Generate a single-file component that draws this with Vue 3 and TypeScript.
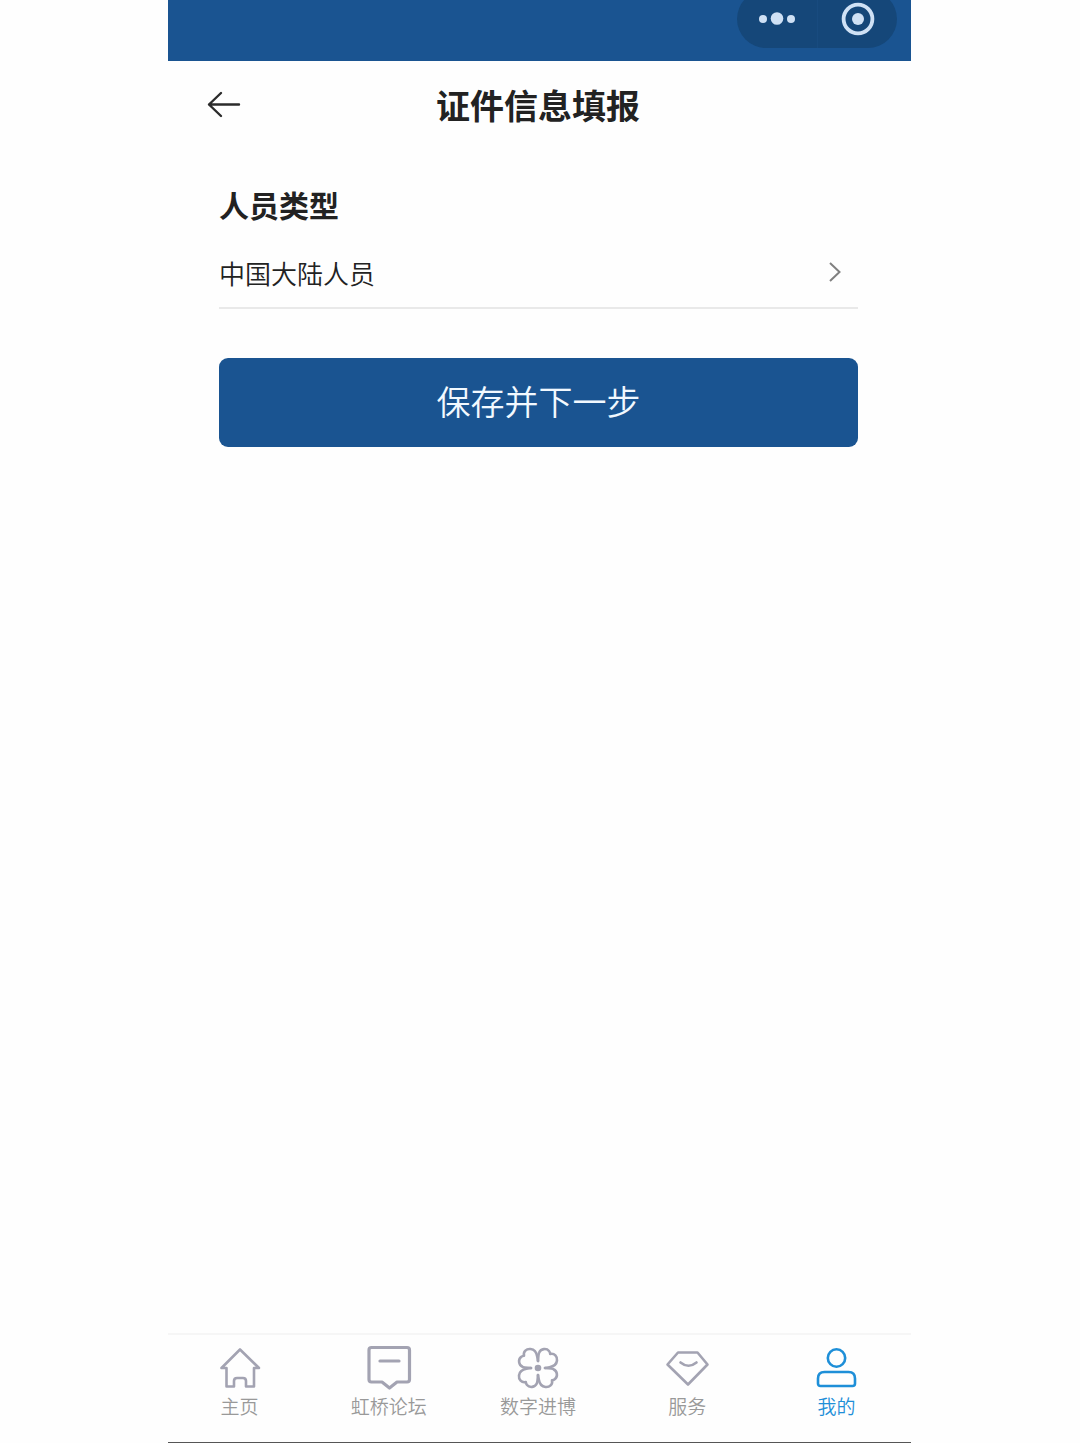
<script setup lang="ts">
import { ref } from 'vue'

interface Tab {
  id: string
  label: string
}

const tabs: Tab[] = [
  { id: 'home', label: '主页' },
  { id: 'forum', label: '虹桥论坛' },
  { id: 'digital', label: '数字进博' },
  { id: 'service', label: '服务' },
  { id: 'mine', label: '我的' },
]

const petalAngles = [0, 90, 180, 270]

const activeTab = ref('mine')
const personType = ref('中国大陆人员')
</script>

<template>
  <div class="page">
    <div class="app">
      <div class="topbar">
        <div class="capsule">
          <button type="button" class="capsule-btn" aria-label="更多">
            <svg width="40" height="34" viewBox="0 0 40 34" fill="#cfe1f5">
              <circle cx="6" cy="17" r="4" />
              <circle cx="20" cy="16.5" r="6.3" />
              <circle cx="34" cy="17" r="4" />
            </svg>
          </button>
          <button type="button" class="capsule-btn" aria-label="关闭">
            <svg width="34" height="34" viewBox="0 0 34 34">
              <circle cx="17" cy="17" r="14.4" fill="none" stroke="#cfe1f5" stroke-width="3.8" />
              <circle cx="17" cy="17" r="6" fill="#cfe1f5" />
            </svg>
          </button>
        </div>
      </div>

      <header class="header">
        <button type="button" class="back" aria-label="返回">
          <svg width="34" height="28" viewBox="0 0 34 28" fill="none" stroke="#2b2b2b" stroke-width="2.4" stroke-linecap="round" stroke-linejoin="round">
            <path d="M14 2 2 13.500l12 11.500M2 13.500h30" />
          </svg>
        </button>
        <h1 class="title">证件信息填报</h1>
      </header>

      <main class="content">
        <form @submit.prevent>
          <label class="label" for="person-type">人员类型</label>
          <div class="field">
            <select id="person-type" v-model="personType" class="select">
              <option>中国大陆人员</option>
            </select>
            <svg class="chevron" width="14" height="22" viewBox="0 0 14 22" fill="none" stroke="#808080" stroke-width="2">
              <path d="M2 2l9.500 9L2 20" />
            </svg>
          </div>
          <button type="submit" class="submit">保存并下一步</button>
        </form>
      </main>

      <nav class="tabbar">
        <ul class="tabs">
          <li v-for="tab in tabs" :key="tab.id" class="tab-item">
            <a href="#" class="tab" :class="{ active: tab.id === activeTab }" @click.prevent="activeTab = tab.id">
              <svg class="icon" viewBox="0 0 46 46" fill="none" stroke="currentColor" stroke-width="2.6" stroke-linecap="round" stroke-linejoin="round">
                <path v-if="tab.id === 'home'" d="M23 4.500 4.500 23H9.500V41.500H17V36Q17 33 20 33H26Q29 33 29 36V41.500H37V23H42Z" />
                <template v-else-if="tab.id === 'forum'">
                  <path stroke-width="3.200" d="M5.500 2.500H41Q43.500 2.500 43.500 5V34.500Q43.500 37 41 37H31L23.500 43 16 37H5.500Q3 37 3 34.500V5Q3 2.500 5.500 2.500Z" />
                  <path stroke-width="3.200" d="M14 16H33" />
                </template>
                <template v-else-if="tab.id === 'digital'">
                  <path
                    v-for="angle in petalAngles"
                    :key="angle"
                    :transform="`rotate(${angle} 23 23)`"
                    d="M16 23C12 22.600 9.500 22.800 7.500 21.800C3.500 20 3 14.500 6 12C7 11.200 8 10.800 9 10.800C8 6.500 11.500 3.500 15.500 4C20 4.500 21.600 8 22.200 11.500C22.500 13 22.800 14.500 23 16"
                  />
                  <circle cx="23" cy="23" r="3.300" fill="currentColor" stroke="none" />
                </template>
                <template v-else-if="tab.id === 'service'">
                  <path d="M14 7.500H33.500L43.500 19.500 24 39.500 3.500 19.500Z" />
                  <path d="M16.500 17.500Q24.500 24 32.500 17.500" />
                </template>
                <template v-else>
                  <circle cx="23.500" cy="13" r="8.700" />
                  <path d="M11.500 27H35.500Q42 27 42 33.500V38.500Q42 41 39.500 41H7.500Q5 41 5 38.500V33.500Q5 27 11.500 27Z" />
                </template>
              </svg>
              <span class="tab-label">{{ tab.label }}</span>
            </a>
          </li>
        </ul>
      </nav>
    </div>
  </div>
</template>

<style>
body {
  background: #fefefe;
}
</style>

<style scoped>
.page {
  box-sizing: border-box;
  min-height: 100vh;
  display: flex;
  padding: 0 169px 0 168px;
  font-family: "Noto Sans CJK SC", "Noto Sans", sans-serif;
  color: #222;
}

.app {
  flex: 1;
  display: flex;
  flex-direction: column;
  border-bottom: 1px solid #555;
}

.topbar {
  display: flex;
  justify-content: flex-end;
  height: 61px;
  padding-right: 14px;
  overflow: hidden;
  background: #1a5491;
}

.capsule {
  display: flex;
  height: 58px;
  margin-top: -10px;
  border-radius: 29px;
  background: #154779;
}

.capsule-btn {
  display: flex;
  align-items: center;
  justify-content: center;
  width: 80px;
  padding: 0;
  border: 0;
  background: none;
}

.capsule-btn + .capsule-btn {
  border-left: 1px solid #184b7f;
}

.header {
  display: grid;
  grid-template-columns: 73px 1fr 73px;
  align-items: center;
  height: 88px;
  padding: 0 3px 0 0;
}

.back {
  display: flex;
  justify-content: flex-end;
  padding: 0;
  border: 0;
  background: none;
}

.title {
  margin: 0;
  font-size: 34px;
  font-weight: 700;
  line-height: 48px;
  text-align: center;
}

.content {
  flex: 1;
  padding: 31px 53px 0 51px;
}

.label {
  display: block;
  font-size: 30px;
  font-weight: 700;
  line-height: 48px;
}

.field {
  display: flex;
  align-items: center;
  margin-top: 9px;
  padding-right: 16px;
  border-bottom: 2px solid #e9e9e9;
}

.select {
  flex: 1;
  height: 70px;
  padding: 0;
  border: 0;
  appearance: none;
  background: none;
  color: inherit;
  font-family: inherit;
  font-size: 26px;
  font-weight: 350;
}

.submit {
  display: block;
  width: 100%;
  height: 89px;
  margin-top: 49px;
  padding: 0 0 4px;
  border: 0;
  border-radius: 9px;
  background: #1a5491;
  color: #f2f9ff;
  font-family: inherit;
  font-size: 34px;
  font-weight: 350;
}

.tabbar {
  border-top: 2px solid #f6f6f6;
}

.tabs {
  display: flex;
  height: 107px;
  margin: 0 0 0 -3px;
  padding: 0;
  list-style: none;
}

.tab-item {
  flex: 1;
}

.tab {
  display: flex;
  flex-direction: column;
  align-items: center;
  padding-top: 10px;
  color: #a3a3b2;
  text-decoration: none;
}

.icon {
  width: 46px;
  height: 46px;
}

.tab-label {
  color: #999;
  font-size: 19px;
  font-weight: 350;
  line-height: 30px;
}

.active,
.active .tab-label {
  color: #1e8fd8;
}
</style>
